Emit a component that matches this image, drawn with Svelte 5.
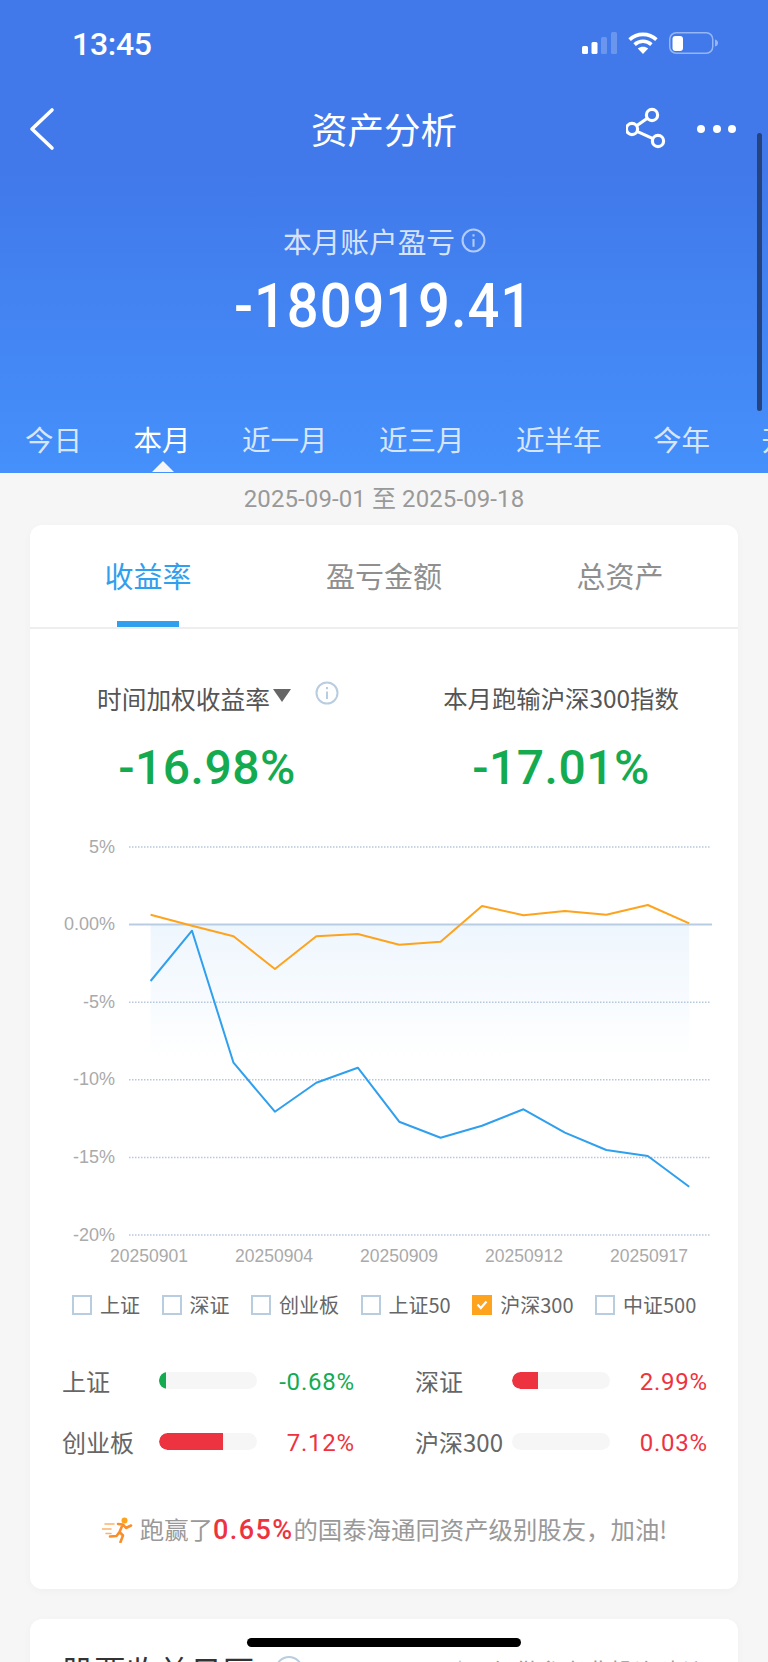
<script>
  const statusBars = [
    { x: 0, h: 8, on: true },
    { x: 9.5, h: 12, on: true },
    { x: 19, h: 17, on: false },
    { x: 29, h: 22, on: false }
  ];

  const periods = ['今日', '本月', '近一月', '近三月', '近半年', '今年', '开户以来'];
  const tabs = ['收益率', '盈亏金额', '总资产'];

  // chart coordinates are the svg's own pixels (0,0 = left edge of card area at y 830)
  const top = 17;
  const step = 77.6;
  const yTicks = ['5%', '0.00%', '-5%', '-10%', '-15%', '-20%'];
  const xLabels = ['20250901', '20250904', '20250909', '20250912', '20250917'];
  const ptX = (i) => 150.6 + 41.43 * i - 30;

  const blue = [981, 930.7, 1062.7, 1111.7, 1082.7, 1067.7, 1121.7, 1137.7, 1125.7, 1109.3, 1132.7, 1150, 1156, 1186.7];
  const orange = [914.7, 925.7, 936.3, 969, 936.3, 934, 944.7, 941.7, 906, 915.3, 911, 914.7, 905, 923.3];
  const toPoints = (ys) => ys.map((y, i) => `${ptX(i).toFixed(1)},${(y - 830).toFixed(1)}`).join(' ');

  const legend = [
    { name: '上证' },
    { name: '深证' },
    { name: '创业板' },
    { name: '上证50' },
    { name: '沪深300', on: true },
    { name: '中证500' }
  ];

  const compare = [
    { name: '上证', pct: 7, val: '-0.68%', down: true },
    { name: '深证', pct: 27, val: '2.99%' },
    { name: '创业板', pct: 65, val: '7.12%' },
    { name: '沪深300', pct: 0, val: '0.03%' }
  ];
</script>

<div class="page">
  <header class="hero">
    <div class="status">
      <span class="time">13:45</span>
      <div class="status-icons">
        <svg width="35" height="22" viewBox="0 0 35 22">
          {#each statusBars as b}
            <rect x={b.x} y={22 - b.h} width="6" height={b.h} rx="1.5" fill="#fff" opacity={b.on ? 1 : 0.22} />
          {/each}
        </svg>
        <svg width="30" height="22" viewBox="0 0 30 22" fill="none" stroke="#fff" stroke-width="3.6">
          <path d="M1.6 7.6 C9 0.6 21 0.6 28.4 7.6" />
          <path d="M6.6 12.6 C11.6 8.2 18.4 8.2 23.4 12.6" />
          <path d="M15 22 L9.8 16.6 C12.8 14.2 17.2 14.2 20.2 16.6 Z" fill="#fff" stroke="none" />
        </svg>
        <svg width="50" height="22" viewBox="0 0 50 22">
          <rect x="0.75" y="0.75" width="43" height="20.5" rx="6.5" fill="none" stroke="#fff" stroke-opacity="0.45" stroke-width="1.5" />
          <rect x="3.5" y="4" width="10.5" height="15" rx="3" fill="#fff" />
          <path d="M46 7.5 C48 8 49 9.3 49 11 C49 12.7 48 14 46 14.5 Z" fill="#fff" fill-opacity="0.45" />
        </svg>
      </div>
    </div>

    <div class="nav">
      <svg class="back" width="26" height="44" viewBox="0 0 26 44" fill="none" stroke="#fff" stroke-width="3.6" stroke-linecap="round" stroke-linejoin="round">
        <path d="M23 3 L3 22 L23 41" />
      </svg>
      <h1>资产分析</h1>
      <div class="nav-actions">
        <svg width="44" height="44" viewBox="0 0 44 44" fill="none" stroke="#fff" stroke-width="3.2">
          <circle cx="26" cy="8" r="5.6" />
          <circle cx="6" cy="22" r="5.6" />
          <circle cx="32" cy="34" r="5.6" />
          <path d="M21.4 11.2 L10.6 18.8 M11 24.4 L27 31.6" />
        </svg>
        <svg width="40" height="10" viewBox="0 0 40 10" fill="#fff">
          <circle cx="4" cy="5" r="4" />
          <circle cx="20" cy="5" r="4" />
          <circle cx="35" cy="5" r="4" />
        </svg>
      </div>
    </div>

    <div class="summary">
      <div class="summary-label">
        本月账户盈亏
        <svg width="25" height="25" viewBox="0 0 24 24" fill="none" stroke="#fff" stroke-opacity="0.6" stroke-width="2">
          <circle cx="12" cy="12" r="10.5" />
          <path d="M12 10.5 V18 M12 6 V8.2" />
        </svg>
      </div>
      <div class="amount"><span>-180919.41</span></div>
    </div>

    <nav class="periods">
      {#each periods as p, i}
        <span class="period" class:active={i === 1}>{p}</span>
      {/each}
    </nav>
  </header>

  <div class="range">2025-09-01 至 2025-09-18</div>

  <section class="card">
    <div class="tabs">
      {#each tabs as t, i}
        <div class="tab" class:active={i === 0}>{t}</div>
      {/each}
    </div>

    <div class="stats">
      <div class="stat">
        <div class="stat-label">
          时间加权收益率<i class="caret"></i>
          <svg class="stat-info" width="24" height="24" viewBox="0 0 24 24" fill="none" stroke="#b9cde0" stroke-width="2">
            <circle cx="12" cy="12" r="10.5" />
            <path d="M12 10.5 V18 M12 6 V8.2" />
          </svg>
        </div>
        <div class="stat-value">-16.98%</div>
      </div>
      <div class="stat">
        <div class="stat-label">本月跑输沪深300指数</div>
        <div class="stat-value">-17.01%</div>
      </div>
    </div>

    <svg class="chart" width="708" height="440" viewBox="0 0 708 440">
      <defs>
        <linearGradient id="area" x1="0" y1="0" x2="0" y2="1">
          <stop offset="0" stop-color="#eef6fd" />
          <stop offset="1" stop-color="#eef6fd" stop-opacity="0" />
        </linearGradient>
      </defs>
      <rect x={ptX(0)} y={top + step} width={ptX(13) - ptX(0)} height="136" fill="url(#area)" />
      {#each yTicks as label, i}
        {#if i === 1}
          <line x1="99" x2="682" y1={top + step * i} y2={top + step * i} stroke="#b8cde3" stroke-width="2" />
        {:else}
          <line x1="99" x2="680" y1={top + step * i} y2={top + step * i} stroke="#b6c8dd" stroke-width="1.5" stroke-dasharray="1.5 1.5" />
        {/if}
        <text x="85" y={top + step * i + 5.5} text-anchor="end" class="axis">{label}</text>
      {/each}
      <polyline points={toPoints(blue)} fill="none" stroke="#2f9fee" stroke-width="2" stroke-linejoin="round" />
      <polyline points={toPoints(orange)} fill="none" stroke="#fea31d" stroke-width="2" stroke-linejoin="round" />
      {#each xLabels as label, i}
        <text x={119 + 125 * i} y="432" text-anchor="middle" class="axis small">{label}</text>
      {/each}
    </svg>

    <div class="legend">
      {#each legend as item}
        <div class="legend-item">
          <span class="box" class:on={item.on}>
            {#if item.on}
              <svg width="12" height="10" viewBox="0 0 12 10" fill="none" stroke="#fff" stroke-width="2.2">
                <path d="M1.5 4.5 L4.8 8 L10.5 1.5" />
              </svg>
            {/if}
          </span>
          {item.name}
        </div>
      {/each}
    </div>

    <div class="compare">
      {#each compare as row}
        <div class="compare-row">
          <span class="compare-name">{row.name}</span>
          <span class="track">
            <span class="fill" class:down={row.down} style="width: {row.pct}%"></span>
          </span>
          <span class="compare-val" class:down={row.down}>{row.val}</span>
        </div>
      {/each}
    </div>

    <div class="beat">
      <svg width="31" height="26" viewBox="0 0 31 26">
        <circle cx="22.5" cy="3.5" r="3" fill="#fea31d" />
        <path d="M16 7 L21 7.5 L24 11 L29 8.5 M20.5 8 L17.5 15 L21 18.5 L18.5 25 M17.5 15 L14.5 19 L8 19.5" fill="none" stroke="#f98e2b" stroke-width="2.6" stroke-linecap="round" stroke-linejoin="round" />
        <path d="M3 7 H12 M0.5 12 H9 M4 16.5 H9" stroke="#fbb26a" stroke-width="1.6" stroke-linecap="round" />
      </svg>
      <span>跑赢了<b>0.65%</b>的国泰海通同资产级别股友，加油!</span>
    </div>
  </section>

  <section class="card next">
    <div class="next-head">
      <span class="next-title">股票收益日历</span>
      <svg class="next-info" width="30" height="30" viewBox="0 0 30 30" fill="none" stroke="#b9cde0" stroke-width="2">
        <circle cx="15" cy="15" r="13" />
      </svg>
      <svg class="next-mark" width="16" height="20" viewBox="0 0 16 20">
        <path d="M8 0 L16 12 H0 Z" fill="#b9cde0" />
      </svg>
      <span class="next-note">仅供参考非投资建议</span>
    </div>
  </section>

  <div class="home-bar"></div>
  <div class="scroll-thumb"></div>
</div>

<style>
  :global(body) {
    margin: 0;
    background: #f6f6f6;
  }

  .page {
    position: relative;
    width: 768px;
    height: 1662px;
    overflow: hidden;
    background: #f6f6f6;
    font-family: "Noto Sans CJK SC", "Liberation Sans", sans-serif;
  }

  .hero {
    height: 473px;
    background: linear-gradient(180deg, #4179ea 0%, #4179ea 36%, #4590fb 100%);
    color: #fff;
  }

  .status {
    display: flex;
    justify-content: space-between;
    padding: 30px 49px 0 72px;
    height: 28px;
  }

  .time {
    font: 500 32px/28px Roboto, sans-serif;
    letter-spacing: -0.3px;
  }

  .status-icons {
    display: flex;
    gap: 11px;
    padding-top: 2px;
  }

  .nav {
    position: relative;
    display: flex;
    justify-content: center;
    margin-top: 49px;
    height: 44px;
  }

  .back {
    position: absolute;
    left: 29px;
    top: 0;
  }

  h1 {
    margin: 0;
    font-size: 36.5px;
    font-weight: 400;
    line-height: 44px;
  }

  .nav-actions {
    position: absolute;
    left: 626px;
    top: 0;
    display: flex;
    align-items: center;
    gap: 27px;
  }

  .summary {
    margin-top: 69px;
    text-align: center;
  }

  .summary-label {
    display: flex;
    justify-content: center;
    align-items: center;
    gap: 6px;
    height: 40px;
    padding-left: 1px;
    font-size: 28.7px;
    color: rgba(255, 255, 255, 0.8);
  }

  .amount {
    margin-top: 10px;
    height: 72px;
    font: 500 61px/72px Roboto, sans-serif;
  }

  .amount span {
    display: inline-block;
    letter-spacing: 1px;
    transform: scaleX(0.92);
  }

  .periods {
    display: flex;
    gap: 51.5px;
    margin-top: 77px;
    padding-left: 25px;
    font-size: 28.5px;
    line-height: 40px;
    white-space: nowrap;
  }

  .period {
    position: relative;
    color: rgba(255, 255, 255, 0.8);
  }

  .period.active {
    color: #fff;
  }

  .period.active::after {
    content: "";
    position: absolute;
    left: 18px;
    top: 42px;
    border: 11px solid transparent;
    border-top: 0;
    border-bottom-color: #f6f6f6;
  }

  .range {
    margin-top: 10px;
    text-align: center;
    font: 24px/32px Roboto, "Noto Sans CJK SC", sans-serif;
    letter-spacing: 0.1px;
    color: #999;
  }

  .card {
    margin: 10px 30px 0;
    border-radius: 12px;
    background: #fff;
    box-shadow: 0 2px 8px rgba(0, 0, 0, 0.03);
  }

  .tabs {
    display: grid;
    grid-template-columns: repeat(3, 1fr);
    height: 102px;
    border-bottom: 2px solid #eee;
  }

  .tab {
    position: relative;
    padding-top: 28px;
    text-align: center;
    font-size: 29px;
    line-height: 44px;
    color: #8f8f8f;
  }

  .tab.active {
    color: #2f9fee;
  }

  .tab.active::after {
    content: "";
    position: absolute;
    left: 50%;
    bottom: 0;
    width: 62px;
    height: 6px;
    margin-left: -31px;
    background: #2f9fee;
  }

  .stats {
    display: grid;
    grid-template-columns: 1fr 1fr;
    padding-top: 51px;
  }

  .stat {
    position: relative;
    text-align: center;
  }

  .stat-label {
    display: flex;
    justify-content: center;
    font-size: 24.4px;
    line-height: 36px;
    color: #555;
    white-space: nowrap;
  }

  .stat:first-child .stat-label {
    justify-content: flex-start;
    padding-left: 67px;
    font-size: 24.7px;
  }

  .caret {
    display: block;
    width: 0;
    height: 0;
    margin: 9px 0 0 3px;
    border: 9.5px solid transparent;
    border-bottom: 0;
    border-top: 13px solid #666;
  }

  .stat-info {
    margin: 0 0 0 24px;
    transform: translateY(1px);
  }

  .stat-value {
    margin-top: 24px;
    font: 500 48px/56px Roboto, sans-serif;
    letter-spacing: 0.5px;
    color: #14ab50;
  }

  .chart {
    display: block;
    margin-top: 34px;
  }

  .axis {
    font-family: "Liberation Sans", sans-serif;
    font-size: 18px;
    fill: #aaa;
  }

  .axis.small {
    font-size: 17.5px;
  }

  .legend {
    display: flex;
    gap: 21.5px;
    margin-top: 21px;
    padding-left: 42px;
    font-size: 20px;
    line-height: 28px;
    color: #666;
    white-space: nowrap;
  }

  .legend-item {
    display: flex;
    align-items: center;
    gap: 8px;
  }

  .box {
    display: flex;
    align-items: center;
    justify-content: center;
    box-sizing: border-box;
    width: 20px;
    height: 20px;
    border: 2px solid #b9cde0;
  }

  .box.on {
    border-color: #fea31d;
    background: #fea31d;
  }

  .compare {
    display: grid;
    grid-template-columns: 293px 293px;
    column-gap: 60px;
    row-gap: 25px;
    margin-top: 43px;
    padding-left: 32px;
  }

  .compare-row {
    display: grid;
    grid-template-columns: 97px 98px 98px;
    align-items: center;
    height: 36px;
    font-size: 24px;
    color: #666;
  }

  .compare-name {
    white-space: nowrap;
  }

  .track {
    display: block;
    height: 17px;
    border-radius: 9px;
    background: #f6f6f6;
    overflow: hidden;
  }

  .fill {
    display: block;
    height: 100%;
    border-radius: 9px 0 0 9px;
    background: #ee3340;
  }

  .fill.down {
    background: #14ab50;
  }

  .compare-val {
    padding-top: 3px;
    text-align: right;
    font-family: Roboto, sans-serif;
    letter-spacing: 0.8px;
    color: #ee3340;
  }

  .compare-val.down {
    color: #14ab50;
  }

  .beat {
    display: flex;
    justify-content: center;
    align-items: center;
    gap: 7px;
    margin-top: 52px;
    padding: 0 0 41px 1px;
    font-size: 24.4px;
    line-height: 36px;
    color: #999;
    white-space: nowrap;
  }

  .beat b {
    font: 500 27px/36px Roboto, sans-serif;
    letter-spacing: 1.4px;
    color: #ee3340;
  }

  .next {
    margin-top: 30px;
    height: 120px;
  }

  .next-head {
    display: flex;
    align-items: center;
    padding: 31px 32px 0;
  }

  .next-title {
    font-size: 32px;
    line-height: 40px;
    color: #333;
  }

  .next-info {
    margin-left: 20px;
  }

  .next-mark {
    position: absolute;
    left: 452px;
    top: 1660px;
  }

  .next-note {
    margin-left: auto;
    font-size: 24px;
    color: #999;
  }

  .home-bar {
    position: absolute;
    left: 247px;
    top: 1638px;
    width: 274px;
    height: 9px;
    border-radius: 5px;
    background: #000;
  }

  .scroll-thumb {
    position: absolute;
    left: 757px;
    top: 133px;
    width: 5px;
    height: 278px;
    border-radius: 3px;
    background: #24437f;
  }
</style>
